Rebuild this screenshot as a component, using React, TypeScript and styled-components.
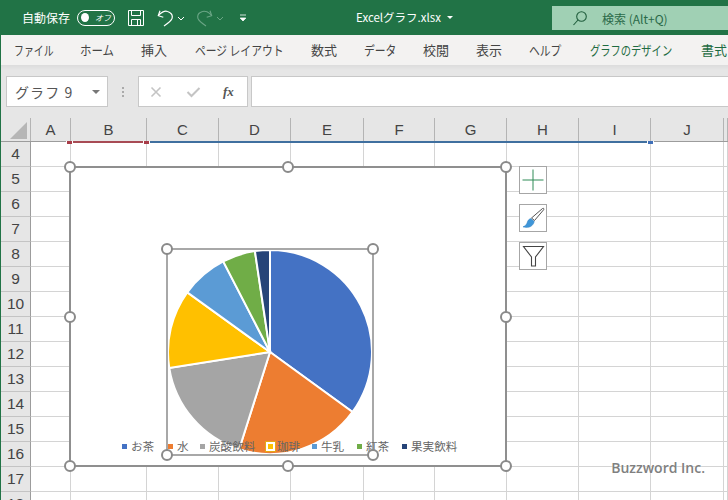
import React from "react";
import styled, { createGlobalStyle } from "styled-components";

const Global = createGlobalStyle`
  html, body { margin: 0; padding: 0; background: #fff; }
  * { box-sizing: border-box; }
`;

const JP = `"Noto Sans CJK JP", "Noto Sans", sans-serif`;
const COLS = "30px 40px 76px 72px 72px 73px 71px 72px 72px 72px 73px 1fr";

const Page = styled.div`
  position: relative;
  width: 728px;
  height: 500px;
  overflow: hidden;
  border-left: 1px solid #217346;
  font-family: ${JP};
  display: flex;
  flex-direction: column;
`;

const TitleBar = styled.header`
  flex: none;
  height: 35px;
  background: #217346;
  color: #fff;
  display: flex;
  align-items: center;
  padding-left: 21px;
`;
const AutoSave = styled.span`
  font-size: 12px;
  width: 49px;
  letter-spacing: 0;
  white-space: nowrap;
`;
const Toggle = styled.span`
  margin-left: 6px;
  width: 38px;
  height: 16px;
  border: 1px solid #fff;
  border-radius: 8px;
  display: flex;
  align-items: center;
  padding: 0 3px;
`;
const Knob = styled.span`
  width: 9px;
  height: 9px;
  border-radius: 50%;
  background: #fff;
`;
const ToggleText = styled.span`
  margin-left: 6px;
  font-size: 8px;
  font-style: italic;
  white-space: nowrap;
`;
const QuickIcon = styled.svg<{ $ml: number }>`
  flex: none;
  margin-left: ${(p) => p.$ml}px;
  display: block;
`;
const FileName = styled.span`
  position: absolute;
  left: 355px;
  top: 9px;
  font-size: 11.5px;
  color: #fff;
  white-space: nowrap;
  display: flex;
  align-items: center;
  gap: 6px;
`;
const SearchBox = styled.div`
  margin-left: auto;
  width: 176px;
  height: 24px;
  margin-top: 1px;
  background: #a0d0b4;
  color: #2b6a49;
  display: flex;
  align-items: center;
  padding-left: 20px;
  font-size: 12px;
  gap: 14px;
  white-space: nowrap;
`;

const Tabs = styled.nav`
  flex: none;
  height: 30px;
  background: #f3f2f1;
  display: flex;
  align-items: center;
  padding: 0 0 2px 13px;
`;
const Tab = styled.span<{ $w: number; $green?: boolean }>`
  flex: none;
  width: ${(p) => p.$w}px;
  font-size: 13px;
  color: ${(p) => (p.$green ? "#1e6b41" : "#444")};
  white-space: nowrap;
`;
const TabText = styled.span<{ $sx: number }>`
  display: inline-block;
  transform: scaleX(${(p) => p.$sx});
  transform-origin: left center;
`;

const FormulaBar = styled.div`
  flex: none;
  height: 53px;
  background: linear-gradient(#dcdcdc 0, #e6e6e6 5px);
  display: flex;
  align-items: flex-start;
  padding: 11px 0 0 5px;
`;
const NameBox = styled.div`
  width: 102px;
  height: 31px;
  background: #fff;
  border: 1px solid #c8c8c8;
  display: flex;
  align-items: center;
  justify-content: space-between;
  padding: 0 7px 0 8px;
  font-size: 14px;
  letter-spacing: 1.1px;
  color: #555;
`;
const Caret = styled.span<{ $light?: boolean }>`
  width: 0;
  height: 0;
  border-left: ${(p) => (p.$light ? 3 : 4)}px solid transparent;
  border-right: ${(p) => (p.$light ? 3 : 4)}px solid transparent;
  border-top: ${(p) => (p.$light ? "3px solid #fff" : "4px solid #777")};
`;
const Grip = styled.div`
  width: 30px;
  height: 31px;
  display: flex;
  flex-direction: column;
  align-items: center;
  justify-content: center;
  gap: 2px;
`;
const GripDot = styled.span`
  width: 2px;
  height: 2px;
  background: #aaa;
`;
const FxButtons = styled.div`
  width: 110px;
  height: 31px;
  background: #fff;
  border: 1px solid #c8c8c8;
  display: flex;
  align-items: center;
  padding-left: 11px;
`;
const Fx = styled.span`
  margin-left: 22px;
  font-family: "Liberation Serif", serif;
  font-style: italic;
  font-weight: 700;
  font-size: 13px;
  color: #555;
`;
const FormulaInput = styled.div`
  flex: 1;
  margin-left: 3px;
  height: 31px;
  background: #fff;
  border: 1px solid #c8c8c8;
  border-right: none;
`;

const Sheet = styled.main`
  position: relative;
  flex: 1;
  min-height: 0;
  font-family: "Liberation Sans", sans-serif;
`;
const ColumnHeader = styled.div`
  height: 24px;
  display: grid;
  grid-template-columns: ${COLS};
  background: #e6e6e6;
  border-bottom: 1px solid #9c9c9c;
`;
const Corner = styled.div`
  position: relative;
  border-right: 1px solid #b4b4b4;
  &::after {
    content: "";
    position: absolute;
    left: 9px;
    top: 4px;
    width: 0;
    height: 0;
    border-left: 17px solid transparent;
    border-bottom: 17px solid #b6b6b6;
  }
`;
const ColumnLabel = styled.div`
  border-right: 1px solid #b4b4b4;
  display: flex;
  align-items: center;
  justify-content: center;
  font-size: 15px;
  color: #444;
`;
const Rows = styled.div`
  display: grid;
  grid-template-rows: repeat(15, 25px);
`;
const Row = styled.div`
  display: grid;
  grid-template-columns: ${COLS};
`;
const RowLabel = styled.div`
  background: #e6e6e6;
  border-right: 1px solid #9c9c9c;
  border-bottom: 1px solid #c4c4c4;
  display: flex;
  align-items: center;
  justify-content: center;
  font-size: 15.5px;
  color: #444;
`;
const Cell = styled.div`
  border-right: 1px solid #d4d4d4;
  border-bottom: 1px solid #d4d4d4;
  background: #fff;
`;

const RangeLine = styled.span<{ $left: number; $width: number; $color: string }>`
  position: absolute;
  top: 23px;
  height: 2px;
  left: ${(p) => p.$left}px;
  width: ${(p) => p.$width}px;
  background: ${(p) => p.$color};
`;
const RangeMark = styled.span<{ $left: number; $color: string }>`
  position: absolute;
  top: 23px;
  height: 3px;
  width: 5px;
  left: ${(p) => p.$left}px;
  background: ${(p) => p.$color};
  box-shadow: 1px 0 0 #fff, -1px 0 0 #fff;
`;

const ChartFrame = styled.section`
  position: absolute;
  left: 68px;
  top: 48px;
  width: 438px;
  height: 301px;
  background: #fff;
  border: 2px solid #8f8f8f;
`;
const Handle = styled.span<{ $x: string; $y: string }>`
  position: absolute;
  z-index: 4;
  left: ${(p) => p.$x};
  top: ${(p) => p.$y};
  width: 12px;
  height: 12px;
  margin: -6px 0 0 -6px;
  background: #fff;
  border: 2px solid #8a8a8a;
  border-radius: 50%;
`;
const PlotArea = styled.div`
  position: absolute;
  left: 95px;
  top: 80px;
  width: 208px;
  height: 208px;
  border: 2px solid #a8a8a8;
`;
const Legend = styled.ul`
  position: absolute;
  z-index: 3;
  left: 51px;
  top: 270px;
  margin: 0;
  padding: 0;
  list-style: none;
  display: flex;
  align-items: center;
  font-family: ${JP};
  font-size: 11.6px;
  color: #666;
  white-space: nowrap;
`;
const LegendItem = styled.li<{ $w: number }>`
  flex: none;
  width: ${(p) => p.$w}px;
  display: flex;
  align-items: center;
  gap: 4px;
`;
const Swatch = styled.span<{ $c: string }>`
  flex: none;
  width: 5px;
  height: 5px;
  background: ${(p) => p.$c};
`;
const SelectedSwatch = styled.span`
  flex: none;
  width: 9px;
  height: 9px;
  margin: 0 -2px;
  background: #ffc000;
  border: 2px solid #fff;
  outline: 1px solid #e6a817;
`;

const SideTools = styled.div`
  position: absolute;
  left: 518px;
  top: 48px;
  display: flex;
  flex-direction: column;
  gap: 10px;
`;
const SideButton = styled.div`
  width: 28px;
  height: 28px;
  background: #fff;
  border: 1px solid #a6a6a6;
  display: flex;
  align-items: center;
  justify-content: center;
`;
const Watermark = styled.div`
  position: absolute;
  right: 23px;
  bottom: 23px;
  font-family: "Open Sans", sans-serif;
  font-size: 14px;
  font-weight: 600;
  color: #808080;
  text-shadow: 0 0 2px #fff;
  white-space: nowrap;
`;

const colLetters = ["A", "B", "C", "D", "E", "F", "G", "H", "I", "J", ""];
const rowNums = [4, 5, 6, 7, 8, 9, 10, 11, 12, 13, 14, 15, 16, 17, 18];
const tabs: { t: string; w: number; sx: number; green?: boolean }[] = [
  { t: "ファイル", w: 66, sx: 0.76 },
  { t: "ホーム", w: 61, sx: 0.88 },
  { t: "挿入", w: 54, sx: 1 },
  { t: "ページ レイアウト", w: 116, sx: 0.83 },
  { t: "数式", w: 53, sx: 1 },
  { t: "データ", w: 59, sx: 0.83 },
  { t: "校閲", w: 53, sx: 1 },
  { t: "表示", w: 53, sx: 1 },
  { t: "ヘルプ", w: 61, sx: 0.83 },
  { t: "グラフのデザイン", w: 111, sx: 0.79, green: true },
  { t: "書式", w: 30, sx: 1, green: true },
];
const slices: [number, number, string][] = [
  [0, 126, "#4472c4"],
  [126, 197.6, "#ed7d31"],
  [197.6, 261, "#a5a5a5"],
  [261, 305.8, "#ffc000"],
  [305.8, 332.7, "#5b9bd5"],
  [332.7, 351.5, "#70ad47"],
  [351.5, 360, "#264478"],
];
const legend: { label: string; color: string; w: number; selected?: boolean }[] = [
  { label: "お茶", color: "#4472c4", w: 46 },
  { label: "水", color: "#ed7d31", w: 32 },
  { label: "炭酸飲料", color: "#a5a5a5", w: 68 },
  { label: "珈琲", color: "#ffc000", w: 44, selected: true },
  { label: "牛乳", color: "#5b9bd5", w: 45 },
  { label: "紅茶", color: "#70ad47", w: 45 },
  { label: "果実飲料", color: "#264478", w: 60 },
];
const handles: [string, string][] = [
  ["-1px", "-1px"], ["50%", "-1px"], ["calc(100% + 1px)", "-1px"],
  ["-1px", "50%"], ["calc(100% + 1px)", "50%"],
  ["-1px", "calc(100% + 1px)"], ["50%", "calc(100% + 1px)"], ["calc(100% + 1px)", "calc(100% + 1px)"],
];
const plotHandles: [string, string][] = [
  ["-1px", "-1px"], ["calc(100% + 1px)", "-1px"],
  ["-1px", "calc(100% + 1px)"], ["calc(100% + 1px)", "calc(100% + 1px)"],
];

function pt(a: number, r = 102): string {
  const t = (a * Math.PI) / 180;
  return `${(102 + r * Math.sin(t)).toFixed(2)} ${(102 - r * Math.cos(t)).toFixed(2)}`;
}

function Pie() {
  return (
    <svg width="204" height="204" viewBox="0 0 204 204" style={{ display: "block" }}>
      {slices.map(([a, b, c]) => (
        <path
          key={c}
          d={`M102 102 L${pt(a)} A102 102 0 ${b - a > 180 ? 1 : 0} 1 ${pt(b)} Z`}
          fill={c}
          stroke="#fff"
          strokeWidth="2"
        />
      ))}
    </svg>
  );
}

export default function App() {
  return (
    <Page>
      <Global />
      <TitleBar>
        <AutoSave>自動保存</AutoSave>
        <Toggle>
          <Knob />
          <ToggleText>オフ</ToggleText>
        </Toggle>
        <QuickIcon $ml={13} width="16" height="16" viewBox="0 0 16 16" fill="none" stroke="#fff" strokeWidth="1">
          <path d="M.5.5h15v15H.5z" />
          <path d="M3.5.5v5h9v-5M3.5 15.5v-6h9v6M9.5 10v5.5" />
        </QuickIcon>
        <QuickIcon $ml={13} width="16" height="18" viewBox="0 0 16 18" fill="none" stroke="#fff" strokeWidth="1.2">
          <path d="M3 1.7L1.3 6.7l5 1.6" />
          <path d="M1.3 6.7C4 3 8 1.5 10.5 2.5 14 3.5 16 6 15 9.5 14 12 10 15 7 17" />
        </QuickIcon>
        <QuickIcon $ml={4} width="8" height="8" viewBox="0 0 8 8" fill="none" stroke="#fff" strokeWidth="1">
          <path d="M1 3l3 3 3-3" />
        </QuickIcon>
        <QuickIcon $ml={12} width="16" height="18" viewBox="0 0 16 18" fill="none" stroke="#6aa585" strokeWidth="1.1">
          <path d="M13 1.7l1.7 5-5 1.6" />
          <path d="M14.7 6.7C12 3 8 1.5 5.5 2.5 2 3.5 0 6 1 9.5 2 12 6 15 9 17" />
        </QuickIcon>
        <QuickIcon $ml={3} width="8" height="8" viewBox="0 0 8 8" fill="none" stroke="#6aa585" strokeWidth="1">
          <path d="M1 3l3 3 3-3" />
        </QuickIcon>
        <QuickIcon $ml={15} width="8" height="8" viewBox="0 0 8 8" fill="#fff" stroke="#fff" strokeWidth="0.8">
          <path d="M1 1h6" fill="none" />
          <path d="M1.2 4h5.6L4 7z" />
        </QuickIcon>
        <FileName>
          Excelグラフ.xlsx
          <Caret $light />
        </FileName>
        <SearchBox>
          <svg width="16" height="16" viewBox="0 0 16 16" fill="none" stroke="#205e3d" strokeWidth="1.1">
            <circle cx="9.5" cy="6.5" r="4.8" />
            <path d="M6 10L1.5 15" />
          </svg>
          <span>検索 (Alt+Q)</span>
        </SearchBox>
      </TitleBar>

      <Tabs>
        {tabs.map((tab) => (
          <Tab key={tab.t} $w={tab.w} $green={tab.green}>
            <TabText $sx={tab.sx}>{tab.t}</TabText>
          </Tab>
        ))}
      </Tabs>

      <FormulaBar>
        <NameBox>
          グラフ 9
          <Caret />
        </NameBox>
        <Grip>
          <GripDot />
          <GripDot />
          <GripDot />
        </Grip>
        <FxButtons>
          <svg width="12" height="12" viewBox="0 0 12 12" stroke="#c4c4c4" strokeWidth="1.6" fill="none">
            <path d="M1.5 1.5l9 9M10.5 1.5l-9 9" />
          </svg>
          <svg width="15" height="12" viewBox="0 0 15 12" stroke="#c4c4c4" strokeWidth="2" fill="none" style={{ marginLeft: 24 }}>
            <path d="M1.5 6l4 4 8-8" />
          </svg>
          <Fx>fx</Fx>
        </FxButtons>
        <FormulaInput />
      </FormulaBar>

      <Sheet>
        <ColumnHeader>
          <Corner />
          {colLetters.map((c, i) => (
            <ColumnLabel key={i}>{c}</ColumnLabel>
          ))}
        </ColumnHeader>
        <Rows>
          {rowNums.map((n) => (
            <Row key={n}>
              <RowLabel>{n}</RowLabel>
              {colLetters.map((_, i) => (
                <Cell key={i} />
              ))}
            </Row>
          ))}
        </Rows>

        <RangeLine $left={72} $width={71} $color="#a84b54" />
        <RangeLine $left={148} $width={499} $color="#3f6f9f" />
        <RangeMark $left={66} $color="#a83c48" />
        <RangeMark $left={143} $color="#a83c48" />
        <RangeMark $left={647} $color="#3f6fb8" />

        <ChartFrame>
          {handles.map(([x, y]) => (
            <Handle key={x + y} $x={x} $y={y} />
          ))}
          <PlotArea>
            <Pie />
            {plotHandles.map(([x, y]) => (
              <Handle key={x + y} $x={x} $y={y} />
            ))}
          </PlotArea>
          <Legend>
            {legend.map((l) => (
              <LegendItem key={l.label} $w={l.w}>
                {l.selected ? <SelectedSwatch /> : <Swatch $c={l.color} />}
                <span>{l.label}</span>
              </LegendItem>
            ))}
          </Legend>
        </ChartFrame>

        <SideTools>
          <SideButton>
            <svg width="22" height="22" viewBox="0 0 22 22" stroke="#2e8b57" strokeWidth="1" fill="none">
              <path d="M11 0.5v21M0.5 11h21" />
            </svg>
          </SideButton>
          <SideButton>
            <svg width="24" height="24" viewBox="0 0 24 24">
              <path d="M21.5 2.5c1-.6 1.8.2 1.2 1.2L13.5 14.5l-3-2.5z" fill="#fff" stroke="#555" strokeWidth="1" />
              <path d="M9.8 12.5l3.5 3c-.8 3.5-3.5 5.5-6 5.8-2 .2-4.2.2-5.3-.5 2 -.6 3.8-2.2 4.3-4.5.4-1.8 1.9-3.4 3.5-3.8z" fill="#3f96d8" stroke="#2f7fc0" strokeWidth="0.5" />
            </svg>
          </SideButton>
          <SideButton>
            <svg width="24" height="24" viewBox="0 0 24 24" fill="#fff" stroke="#444" strokeWidth="1.1">
              <path d="M2.5 2.5h20L14.5 13v9h-4v-9z" />
            </svg>
          </SideButton>
        </SideTools>

        <Watermark>Buzzword Inc.</Watermark>
      </Sheet>
    </Page>
  );
}
